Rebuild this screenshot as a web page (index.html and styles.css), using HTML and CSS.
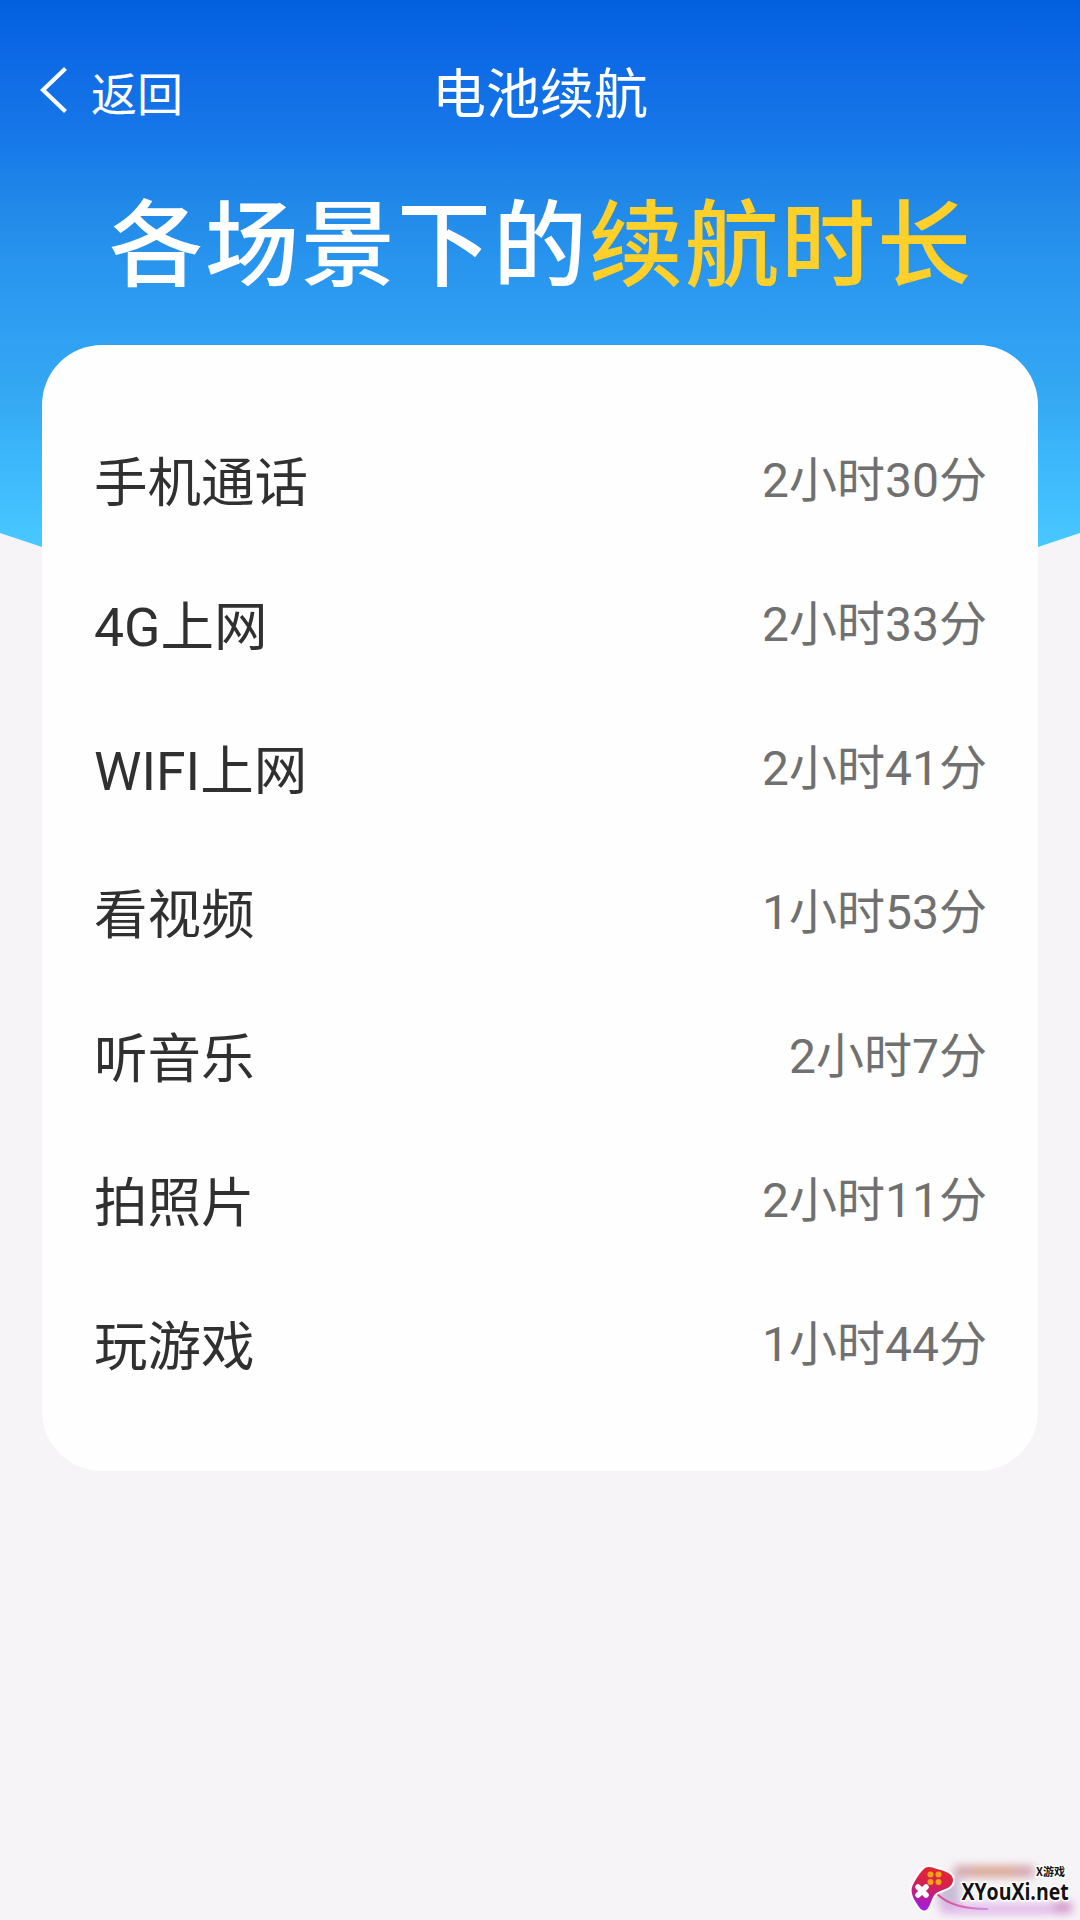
FILE: index.html
```html
<!DOCTYPE html>
<html lang="zh-CN">
<head>
  <meta charset="UTF-8" />
  <title>电池续航</title>
  <link rel="stylesheet" href="styles.css">
</head>
<body>
  <div class="page">
    <div class="hero-bg"></div>

    <header class="navbar">
      <a class="back">
        <svg class="back-icon" viewBox="0 0 28 48" width="28" height="48">
          <path d="M25.500 2.500 L3 24 L25.500 45.500" fill="none" stroke="#fff" stroke-width="4.200" />
        </svg>
        <span>返回</span>
      </a>
      <div class="nav-title">电池续航</div>
    </header>

    <h1>各场景下的<span class="highlight">续航时长</span></h1>

    <ul class="card">
      <li><span class="label">手机通话</span><span class="value">2小时30分</span></li>
      <li><span class="label">4G上网</span><span class="value">2小时33分</span></li>
      <li><span class="label">WIFI上网</span><span class="value">2小时41分</span></li>
      <li><span class="label">看视频</span><span class="value">1小时53分</span></li>
      <li><span class="label">听音乐</span><span class="value">2小时7分</span></li>
      <li><span class="label">拍照片</span><span class="value">2小时11分</span></li>
      <li><span class="label">玩游戏</span><span class="value">1小时44分</span></li>
    </ul>

    <svg class="site-logo" viewBox="0 0 190 80" width="190" height="80">
      <defs>
        <linearGradient id="pad" x1="0.6" y1="0" x2="0.4" y2="1">
          <stop offset="0" stop-color="#e5262b" />
          <stop offset="0.45" stop-color="#d31f55" />
          <stop offset="1" stop-color="#a21be6" />
        </linearGradient>
        <linearGradient id="cord" x1="0" y1="0" x2="1" y2="0">
          <stop offset="0" stop-color="#d8488a" />
          <stop offset="1" stop-color="#d58be8" />
        </linearGradient>
        <filter id="soft" x="-30%" y="-60%" width="160%" height="220%">
          <feGaussianBlur stdDeviation="5" />
        </filter>
      </defs>
      <g filter="url(#soft)">
        <rect x="64" y="26" width="80" height="11" fill="#c98a96" opacity="0.8" />
        <rect x="82" y="28" width="44" height="6" fill="#dca05e" opacity="0.7" />
        <rect x="48" y="38" width="22" height="26" fill="#a995c0" opacity="0.6" />
        <rect x="50" y="64" width="132" height="10" fill="#d9a0e4" opacity="0.75" />
        <rect x="164" y="62" width="18" height="9" fill="#c06aa8" opacity="0.6" />
      </g>
      <path d="M47 54 C58 64 72 69 98 69" fill="none" stroke="url(#cord)" stroke-width="2" />
      <path d="M35 28 C38 26 42 27 47 29 C54 31 63 33 63 40 C63 48 54 49 48 52 C42 55 42 62 38 68 C35 72 32 71 29 67 C25 61 20 54 22 47 C25 40 30 32 35 28 Z" fill="url(#pad)" stroke="#fff" stroke-width="4" paint-order="stroke" />
      <g fill="#f9a11b">
        <circle cx="40.500" cy="34.500" r="3" />
        <circle cx="48.500" cy="34.500" r="3" />
        <circle cx="40.500" cy="42" r="3" />
        <circle cx="48.500" cy="42" r="3" />
      </g>
      <path d="M28 47 L36 55 M36 47 L28 55" stroke="#fff" stroke-width="5.500" stroke-linecap="round" />
      <text class="logo-name" transform="translate(71.500 60) scale(0.850 1)" textLength="126" lengthAdjust="spacingAndGlyphs">XYouXi.net</text>
      <text class="logo-sub" x="146" y="36" textLength="29" lengthAdjust="spacingAndGlyphs">X游戏</text>
    </svg>
  </div>
</body>
</html>
```
FILE: styles.css
```css
* {
  box-sizing: border-box;
}
body {
  margin: 0;
  background: #f6f4f7;
  font-family: Roboto, "Noto Sans CJK SC", sans-serif;
}
.page {
  position: relative;
  height: 1920px;
  overflow: hidden;
}
.hero-bg {
  position: absolute;
  top: 0;
  left: 0;
  right: 0;
  height: 548px;
  background: linear-gradient(#025fdd 0, #0b67e5 45px, #1371e7 100px, #197cea 155px, #2189e8 205px, #2895ee 265px, #2f9ff3 330px, #35a9f2 400px, #3cb7fc 460px, #48c8ff 548px);
  clip-path: polygon(0 0, 100% 0, 100% 533px, 1038px 547px, 42px 547px, 0 533px);
}
.navbar {
  position: relative;
  display: grid;
  grid-template-columns: 1fr auto 1fr;
  align-items: center;
  height: 184px;
  padding: 0 40px 3px;
  color: #fff;
}
.back {
  display: flex;
  align-items: center;
  gap: 23px;
  font-size: 46px;
}
.back-icon {
  margin-bottom: 2px;
}
.nav-title {
  font-size: 54px;
}
h1 {
  position: relative;
  margin: 0;
  padding-left: 2px;
  height: 161px;
  line-height: 126px;
  font-size: 94px;
  font-weight: 500;
  letter-spacing: 2px;
  text-align: center;
  color: #fff;
}
.highlight {
  color: #ffd02a;
}
.card {
  position: relative;
  margin: 0 42px;
  padding: 61px 52px 57px;
  height: 1126px;
  border-radius: 60px;
  background: #fefefe;
  list-style: none;
}
.card li {
  display: flex;
  justify-content: space-between;
  align-items: center;
  height: 144px;
}
.label {
  font-size: 53.5px;
  color: #303030;
}
.value {
  margin-right: -1px;
  padding-bottom: 5px;
  font-size: 48px;
  color: #707070;
}
.site-logo {
  position: absolute;
  right: 0;
  bottom: 0;
}
.site-logo text {
  fill: #111;
  stroke: #fff;
  stroke-width: 3px;
  stroke-linejoin: round;
  paint-order: stroke;
}
.logo-name {
  font: 700 23px "Open Sans", sans-serif;
}
.logo-sub {
  font: 700 11px "Noto Sans CJK SC", sans-serif;
}
```
